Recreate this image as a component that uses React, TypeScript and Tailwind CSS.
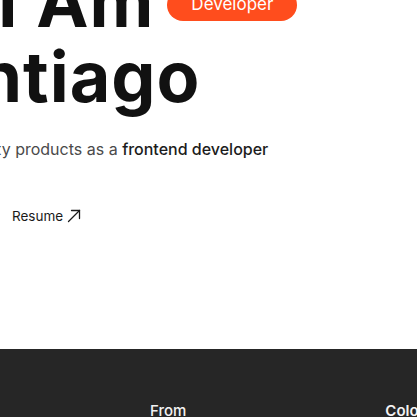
export default function App() {
  return (
    <div className="w-[417px] h-[417px] overflow-hidden bg-white flex flex-col font-['Inter',sans-serif]">
      {/* hero */}
      <section className="h-[349px] shrink-0 overflow-hidden">
        <div className="mt-[-35px]">
          <div className="flex items-center gap-[13px]">
            <h1 className="ml-[-2px] text-[70px] leading-[73px] font-bold tracking-[1px] text-[#111111] whitespace-nowrap">
              I Am
            </h1>
            <span className="mt-[6px] h-[32px] w-[130px] rounded-full bg-[#ff4d1d] flex items-center justify-center text-white text-[17px] leading-none">
              Developer
            </span>
          </div>
          <h1 className="mt-[2px] ml-[-110px] text-[70px] leading-[73px] font-bold tracking-[1px] text-[#111111] whitespace-nowrap">
            Santiago
          </h1>
          <p className="mt-[23px] ml-[-90px] text-[16px] leading-[26px] text-[#4a4a4a] whitespace-nowrap">
            I build quality products as a{" "}
            <span className="font-medium text-[#1c1c1c]">frontend developer</span>
          </p>
          <a href="#" className="mt-[44px] ml-[12px] inline-flex items-center gap-[4px] text-[13.5px] leading-[20px] text-[#1a1a1a]">
            Resume
            <svg width="14" height="14" viewBox="0 0 14 14" fill="none" stroke="currentColor" strokeWidth="1.3" strokeLinecap="round">
              <path d="M1.5 12.5 12.5 1.5" />
              <path d="M4.5 1.5h8v8" />
            </svg>
          </a>
        </div>
      </section>

      {/* footer */}
      <footer className="flex-1 bg-[#262626] flex items-start pt-[52px] text-[15px] leading-[20px] text-[#f2f2f2] font-medium">
        <span className="ml-[150px]">From</span>
        <span className="ml-[199px] font-semibold whitespace-nowrap">Color</span>
      </footer>
    </div>
  )
}
